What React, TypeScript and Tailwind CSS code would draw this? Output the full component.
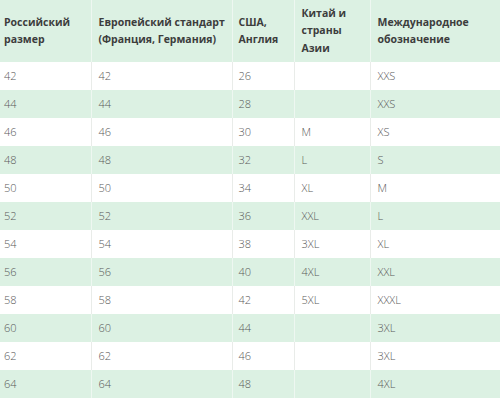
import * as React from 'react';

const rows: string[][] = [
  ['42', '42', '26', '', 'XXS'],
  ['44', '44', '28', '', 'XXS'],
  ['46', '46', '30', 'M', 'XS'],
  ['48', '48', '32', 'L', 'S'],
  ['50', '50', '34', 'XL', 'M'],
  ['52', '52', '36', 'XXL', 'L'],
  ['54', '54', '38', '3XL', 'XL'],
  ['56', '56', '40', '4XL', 'XXL'],
  ['58', '58', '42', '5XL', 'XXXL'],
  ['60', '60', '44', '', '3XL'],
  ['62', '62', '46', '', '3XL'],
  ['64', '64', '48', '', '4XL'],
];

const widths = ['w-[91px]', 'w-[141px]', 'w-[62px]', 'w-[76px]', 'w-[130px]'];

export default function App() {
  return (
    <div className="w-[500px] h-[400px] overflow-hidden bg-white font-['Open_Sans',sans-serif]">
      <table className="w-[500px] table-fixed border-collapse">
        <colgroup>
          {widths.map((w, i) => (
            <col key={i} className={w} />
          ))}
        </colgroup>
        <thead>
          <tr className="h-[62px] bg-[#dcf1e3] text-[10.5px] leading-[17.5px] font-bold text-[#3d3d3d] whitespace-nowrap">
            <th className="text-left align-middle pl-[4px] pr-1 border-r border-[#eef7f1]">
              Российский<br />размер
            </th>
            <th className="text-left align-middle px-[7px] border-r border-[#eef7f1]">
              Европейский стандарт<br />(Франция, Германия)
            </th>
            <th className="text-left align-middle px-[6px] border-r border-[#eef7f1]">
              США,<br />Англия
            </th>
            <th className="text-left align-middle px-[7px] border-r border-[#eef7f1]">
              Китай и<br />страны<br />Азии
            </th>
            <th className="text-left align-middle px-[7px]">
              Международное<br />обозначение
            </th>
          </tr>
        </thead>
        <tbody>
          {rows.map((r, i) => (
            <tr
              key={i}
              className={
                'h-[28px] text-[11px] font-light text-[#5a5a5a] ' +
                (i % 2 === 1 ? 'bg-[#dcf1e3]' : 'bg-white')
              }
            >
              {r.map((c, j) => (
                <td
                  key={j}
                  className={
                    (j === 0 ? 'pl-[4px] ' : j === 2 ? 'px-[6px] ' : 'px-[7px] ') +
                    (j < 4 ? 'border-r ' : '') +
                    (i % 2 === 1 ? 'border-[#eef7f1]' : 'border-[#e9ece9]')
                  }
                >
                  {c}
                </td>
              ))}
            </tr>
          ))}
        </tbody>
      </table>
    </div>
  );
}
